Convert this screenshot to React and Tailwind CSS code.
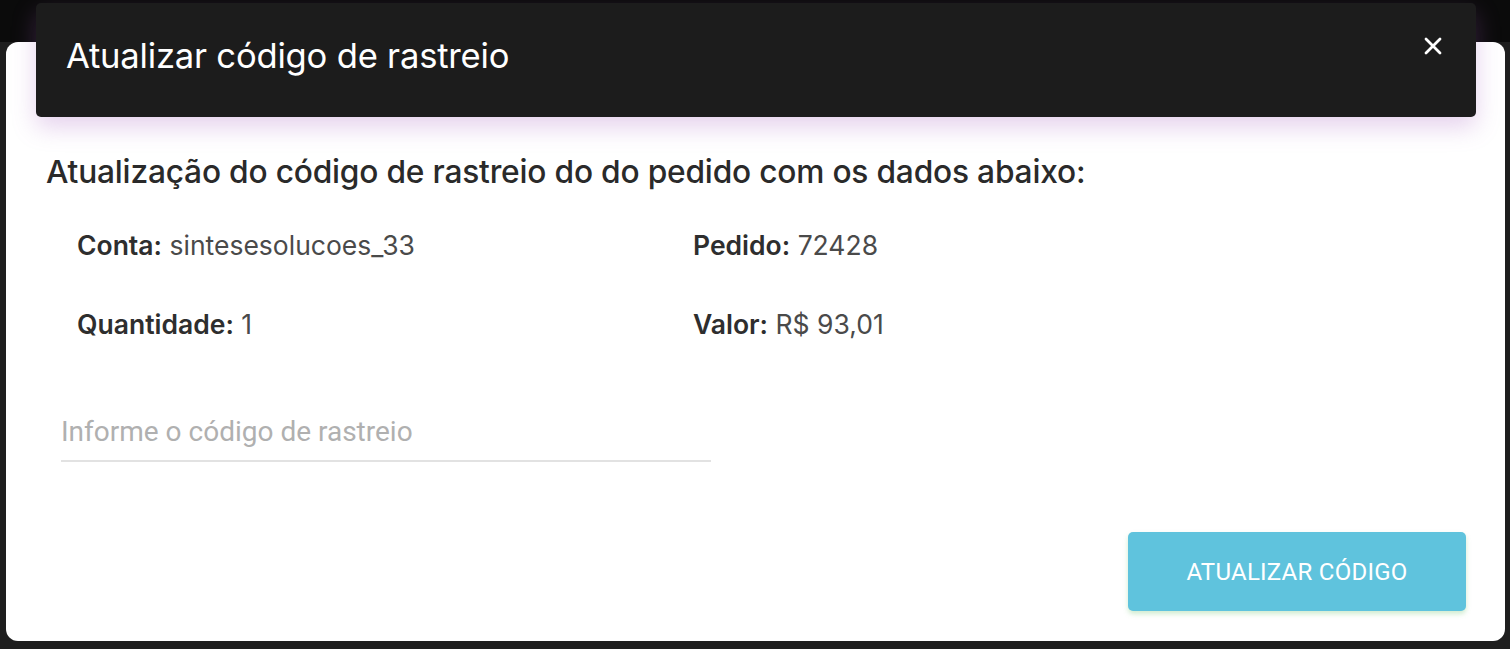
import React from "react";

export default function App() {
  return (
    <div className="relative w-[1510px] h-[649px] overflow-hidden bg-[#1e1e1e]" style={{ fontFamily: "Inter, 'Noto Sans', sans-serif" }}>
      <div className="h-[42px] bg-[#0b0b0b]" />
      <div className="absolute left-[6px] top-[42px] w-[1499px] h-[599px] rounded-[12px] bg-white">
        <div className="pt-[111px] pl-[40px] pr-[39px]">
          <h2 className="text-[31.7px] leading-[38px] font-medium text-[#2a2a2a] tracking-[-0.2px]">
            Atualização do código de rastreio do do pedido com os dados abaixo:
          </h2>
          <div className="grid grid-cols-[616px_1fr] pl-[31px] mt-[40px] gap-y-[51px] text-[26.5px] leading-[28px]">
            <div><span className="font-semibold text-[#2e2e2e]">Conta:</span> <span className="text-[#4a4a4a]">sintesesolucoes_33</span></div>
            <div><span className="font-semibold text-[#2e2e2e]">Pedido:</span> <span className="text-[#4a4a4a]">72428</span></div>
            <div><span className="font-semibold text-[#2e2e2e]">Quantidade:</span> <span className="text-[#4a4a4a]">1</span></div>
            <div><span className="font-semibold text-[#2e2e2e]">Valor:</span> <span className="text-[#4a4a4a]">R$ 93,01</span></div>
          </div>
          <div className="ml-[15px] mt-[78px] w-[650px] border-b-2 border-[#e2e2e2] pb-[12px]">
            <input
              className="w-full outline-none bg-transparent text-[28px] leading-[32px] placeholder-[#b0b0b0]"
              style={{ fontFamily: "Roboto, sans-serif" }}
              placeholder="Informe o código de rastreio"
            />
          </div>
          <div className="flex justify-end mt-[70px]">
            <button
              className="w-[338px] h-[79px] rounded-[5px] bg-[#5fc3dd] text-white text-[24px] tracking-[0.25px] shadow-[0_3px_5px_rgba(120,200,120,0.35)]"
              style={{ fontFamily: "Roboto, sans-serif" }}
            >
              ATUALIZAR CÓDIGO
            </button>
          </div>
        </div>
      </div>
      <div className="absolute left-[36px] top-[3px] w-[1440px] h-[114px] rounded-[5px] bg-[#1c1c1c] shadow-[0_10px_24px_rgba(160,90,190,0.28)] flex items-start justify-between pl-[30px] pr-[34px]">
        <span className="mt-[32px] text-white text-[34.6px] leading-[40px] tracking-[-0.2px]">Atualizar código de rastreio</span>
        <svg width="18" height="18" viewBox="0 0 18 18" className="mt-[34px]">
          <path d="M2 2 L16 16 M16 2 L2 16" stroke="white" strokeWidth="2.8" strokeLinecap="round" />
        </svg>
      </div>
    </div>
  );
}
